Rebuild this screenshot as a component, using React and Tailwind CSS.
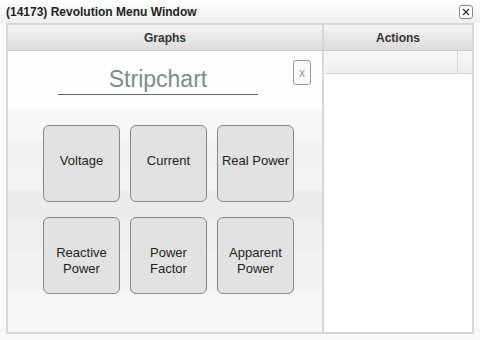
const buttons = [
  ['Voltage'],
  ['Current'],
  ['Real Power'],
  ['Reactive', 'Power'],
  ['Power', 'Factor'],
  ['Apparent', 'Power'],
];

function CloseIcon({ className }) {
  return (
    <svg viewBox="0 0 10 10" className={className}>
      <path d="M2 2 L8 8 M8 2 L2 8" stroke="#333" strokeWidth="1.3" fill="none" />
    </svg>
  );
}

export default function App() {
  return (
    <div
      className="w-[480px] h-[340px] bg-[#fafafa] flex flex-col overflow-hidden"
      style={{ fontFamily: '"Liberation Sans", Arial, sans-serif' }}
    >
      {/* title bar */}
      <div className="h-[23px] flex items-center justify-between pl-[6px] pr-[7px] bg-gradient-to-b from-white to-[#efefef]">
        <span className="text-[12px] font-bold text-[#222]">(14173) Revolution Menu Window</span>
        <div className="w-[14px] h-[14px] border border-[#888] rounded-[3px] bg-white flex items-center justify-center">
          <CloseIcon className="w-[10px] h-[10px]" />
        </div>
      </div>

      <div className="flex-1 mx-[6px] mb-[6px] border-2 border-[#d6d6d6] flex bg-[#d6d6d6]">
        {/* Graphs panel */}
        <div className="w-[314px] flex flex-col bg-white">
          <div className="h-[26px] flex items-center justify-center bg-gradient-to-b from-[#f4f4f4] to-[#dcdcdc] border-b border-[#ccc]">
            <span className="text-[12px] font-bold text-[#333]">Graphs</span>
          </div>
          <div className="flex-1 flex flex-col bg-[linear-gradient(to_bottom,#fefefe_0px,#fefefe_58px,#f6f7f6_58px,#f6f7f6_88px,#f1f3f1_88px,#f1f3f1_118px,#f4f3f4_118px,#f4f3f4_140px,#ecebec_140px,#ecebec_170px,#efefef_170px,#efefef_200px,#f2f2f2_200px,#f2f2f2_240px,#f7f6f7_240px)]">
            <div className="relative h-[74px]">
              <div className="ml-[50px] mt-[14px] w-[200px] h-[30px] border-b border-[#666] flex items-center justify-center">
                <span className="text-[23px] text-[#7f8c8d] leading-none">Stripchart</span>
              </div>
              <div className="absolute left-[285px] top-[9px] w-[18px] h-[25px] border border-[#999] rounded-[3px] flex items-center justify-center text-[12px] text-[#999] bg-[#fafafa]">
                x
              </div>
            </div>
            <div className="ml-[35px] grid grid-cols-[77px_77px_77px] gap-x-[10px] gap-y-[15px]">
              {buttons.map((lines, i) => (
                <div
                  key={i}
                  className="h-[77px] pt-[27px] rounded-[6px] border border-[#888] bg-[#e2e2e2] flex flex-col items-center text-[13px] leading-[16px] text-[#222]"
                >
                  {lines.map((l) => (
                    <span key={l}>{l}</span>
                  ))}
                </div>
              ))}
            </div>
          </div>
        </div>

        {/* splitter */}
        <div className="w-[2px] bg-[#d6d6d6]" />

        {/* Actions panel */}
        <div className="flex-1 flex flex-col bg-white">
          <div className="h-[26px] flex items-center justify-center bg-gradient-to-b from-[#f4f4f4] to-[#dcdcdc] border-b border-[#ccc]">
            <span className="text-[12px] font-bold text-[#333]">Actions</span>
          </div>
          <div className="h-[23px] ml-[1px] flex bg-gradient-to-b from-[#f7f7f7] to-[#efefef] border-b border-[#d4d4d4]">
            <div className="flex-1 border-r border-[#d8d8d8]" />
            <div className="w-[14px]" />
          </div>
          <div className="flex-1 bg-white" />
        </div>
      </div>
    </div>
  );
}
